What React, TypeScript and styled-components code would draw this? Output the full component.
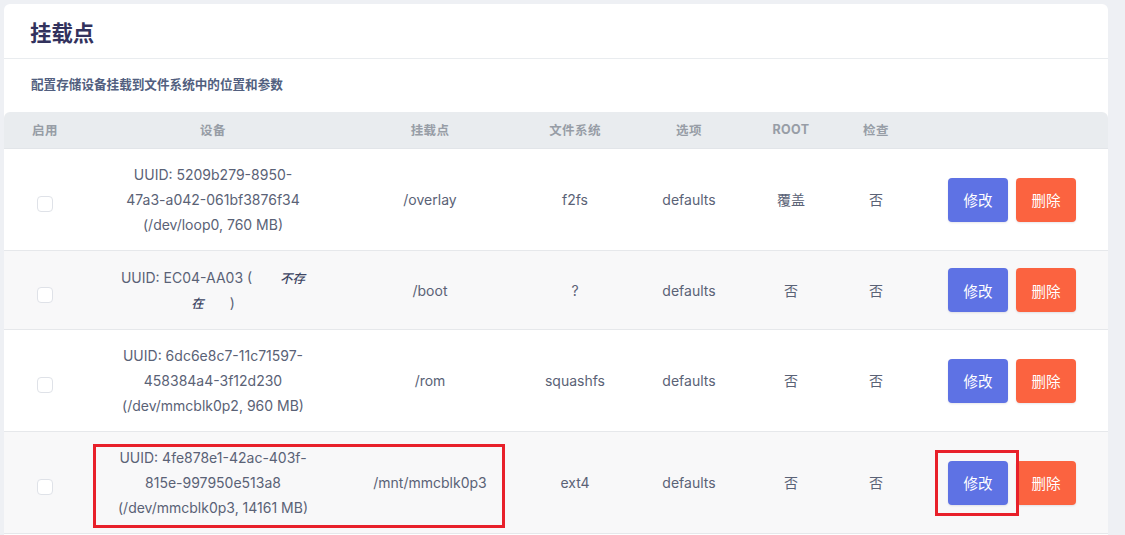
import React from "react";
import styled, { createGlobalStyle } from "styled-components";

const Global = createGlobalStyle`
  html, body { margin: 0; padding: 0; background: #eef0f4; }
  body { font-family: Inter, "Noto Sans CJK SC", sans-serif; }
`;

const Page = styled.div`
  padding: 4px 17px 0 4px;
  height: 535px;
  overflow: hidden;
  box-sizing: border-box;
`;

const Card = styled.section`
  background: #ffffff;
  border-radius: 6px;
  min-height: 600px;
`;

const CardHeader = styled.header`
  height: 54px;
  display: flex;
  align-items: center;
  padding-left: 26px;
  border-bottom: 1px solid #e9ecef;
`;

const Title = styled.h2`
  margin: 0;
  font-size: 21.4px;
  font-weight: 700;
  color: #32325d;
  font-family: "Noto Sans CJK SC", sans-serif;
`;

const Desc = styled.p`
  margin: 0;
  padding: 15px 0 0 27px;
  box-sizing: border-box;
  height: 53px;
  font-size: 12.6px;
  font-weight: 700;
  color: #525f7f;
  font-family: "Noto Sans CJK SC", sans-serif;
`;

const COLS = "82px 254px 180px 110px 118px 86px 84px 190px";

const HeadRow = styled.div`
  display: grid;
  grid-template-columns: ${COLS};
  height: 37px;
  box-sizing: border-box;
  align-items: center;
  background: #e9ecef;
  border-radius: 6px 6px 0 0;
  border-bottom: 1px solid #e2e5e9;
`;

const HeadCell = styled.div`
  text-align: center;
  font-size: 12.5px;
  font-weight: 700;
  color: #979da6;
  letter-spacing: 0.4px;
  margin-top: -2px;
`;

const Row = styled.div<{ $alt?: boolean }>`
  position: relative;
  display: grid;
  grid-template-columns: ${COLS};
  align-items: center;
  min-height: 79px;
  padding: 13px 0;
  box-sizing: border-box;
  background: ${(p) => (p.$alt ? "#f8f8f9" : "#ffffff")};
  border-bottom: 1px solid #e6e8eb;
`;

const Cell = styled.div`
  text-align: center;
  font-size: 14px;
  line-height: 25px;
  color: #5a6276;
`;

const DeviceLine = styled.div`
  white-space: nowrap;
  height: 25px;
`;

const Em = styled.em<{ $pad: "left" | "right" }>`
  font-size: 12.5px;
  font-weight: 500;
  color: #3d4563;
  ${(p) => (p.$pad === "left" ? "padding-left: 28px;" : "padding-right: 26px;")}
`;

const Check = styled.span`
  display: inline-block;
  width: 16px;
  height: 16px;
  margin-top: 7px;
  border: 1px solid #dfe2e8;
  border-radius: 4px;
  background: #fff;
  box-sizing: border-box;
  vertical-align: middle;
`;

const Actions = styled.div`
  display: flex;
  justify-content: center;
  gap: 8px;
  padding-right: 2px;
`;

const Btn = styled.button<{ $kind: "edit" | "del" }>`
  width: 60px;
  height: 44px;
  border: none;
  border-radius: 4px;
  color: #fff;
  font-size: 14.5px;
  font-family: "Noto Sans CJK SC", sans-serif;
  background: ${(p) => (p.$kind === "edit" ? "#5e72e4" : "#fb6340")};
  box-shadow: 0 1px 2px rgba(50, 50, 93, 0.12);
  cursor: pointer;
`;

const Mark = styled.div<{ $l: number; $t: number; $w: number; $h: number }>`
  position: absolute;
  left: ${(p) => p.$l}px;
  top: ${(p) => p.$t}px;
  width: ${(p) => p.$w}px;
  height: ${(p) => p.$h}px;
  border: 3px solid #e8202a;
  box-sizing: border-box;
  pointer-events: none;
`;

type R = {
  device: React.ReactNode[];
  mount: string;
  fs: string;
  root: string;
  check: string;
  alt?: boolean;
  marks?: boolean;
};

const rows: R[] = [
  {
    device: ["UUID: 5209b279-8950-", "47a3-a042-061bf3876f34", "(/dev/loop0, 760 MB)"],
    mount: "/overlay",
    fs: "f2fs",
    root: "覆盖",
    check: "否",
  },
  {
    device: [
      <>
        UUID: EC04-AA03 (<Em $pad="left">不存</Em>
      </>,
      <>
        <Em $pad="right">在</Em>)
      </>,
    ],
    mount: "/boot",
    fs: "?",
    root: "否",
    check: "否",
    alt: true,
  },
  {
    device: ["UUID: 6dc6e8c7-11c71597-", "458384a4-3f12d230", "(/dev/mmcblk0p2, 960 MB)"],
    mount: "/rom",
    fs: "squashfs",
    root: "否",
    check: "否",
  },
  {
    device: ["UUID: 4fe878e1-42ac-403f-", "815e-997950e513a8", "(/dev/mmcblk0p3, 14161 MB)"],
    mount: "/mnt/mmcblk0p3",
    fs: "ext4",
    root: "否",
    check: "否",
    alt: true,
    marks: true,
  },
];

const heads = ["启用", "设备", "挂载点", "文件系统", "选项", "ROOT", "检查", ""];

export default function App() {
  return (
    <>
      <Global />
      <Page>
        <Card>
          <CardHeader>
            <Title>挂载点</Title>
          </CardHeader>
          <Desc>配置存储设备挂载到文件系统中的位置和参数</Desc>
          <HeadRow>
            {heads.map((h, i) => (
              <HeadCell key={i}>{h}</HeadCell>
            ))}
          </HeadRow>
          {rows.map((r, i) => (
            <Row key={i} $alt={r.alt}>
              <Cell>
                <Check />
              </Cell>
              <Cell>
                {r.device.map((d, j) => (
                  <DeviceLine key={j}>{d}</DeviceLine>
                ))}
              </Cell>
              <Cell>{r.mount}</Cell>
              <Cell>{r.fs}</Cell>
              <Cell>defaults</Cell>
              <Cell>{r.root}</Cell>
              <Cell>{r.check}</Cell>
              <Actions>
                <Btn $kind="edit">修改</Btn>
                <Btn $kind="del">删除</Btn>
              </Actions>
              {r.marks && (
                <>
                  <Mark $l={89} $t={12} $w={412} $h={84} />
                  <Mark $l={931} $t={18} $w={84} $h={66} />
                </>
              )}
            </Row>
          ))}
        </Card>
      </Page>
    </>
  );
}
